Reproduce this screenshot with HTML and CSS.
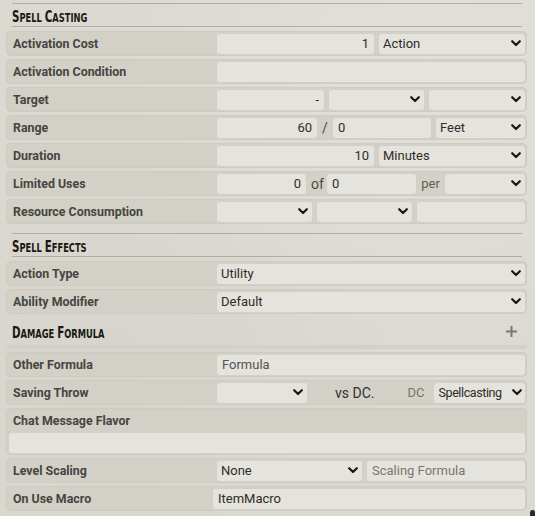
FILE: index.html
```html
<!DOCTYPE html>
<html>
<head>
<meta charset="utf-8">
<link rel="stylesheet" href="styles.css">
</head>
<body>
<div class="sheet">
  <div class="rule"></div>
  <h3 class="form-header"><span class="htext"><span class="cap">S</span>pell <span class="cap">C</span>asting</span></h3>
  <div class="rows">
    <div class="row">
      <span class="label">Activation Cost</span>
      <div class="fields">
        <input class="inp num w157" value="1">
        <div class="select grow"><span>Action</span><svg class="chev" viewBox="0 0 10 7"><path d="M1.2 1.2 L5 5 L8.8 1.2"/></svg></div>
      </div>
    </div>
    <div class="row">
      <span class="label">Activation Condition</span>
      <div class="fields">
        <input class="inp grow" value="">
      </div>
    </div>
    <div class="row">
      <span class="label">Target</span>
      <div class="fields">
        <input class="inp num w107" value="-">
        <div class="select w95"><span></span><svg class="chev" viewBox="0 0 10 7"><path d="M1.2 1.2 L5 5 L8.8 1.2"/></svg></div>
        <div class="select grow"><span></span><svg class="chev" viewBox="0 0 10 7"><path d="M1.2 1.2 L5 5 L8.8 1.2"/></svg></div>
      </div>
    </div>
    <div class="row">
      <span class="label">Range</span>
      <div class="fields">
        <input class="inp num w100" value="60">
        <span class="sep slash">/</span>
        <input class="inp w98" value="0">
        <div class="select grow"><span>Feet</span><svg class="chev" viewBox="0 0 10 7"><path d="M1.2 1.2 L5 5 L8.8 1.2"/></svg></div>
      </div>
    </div>
    <div class="row">
      <span class="label">Duration</span>
      <div class="fields">
        <input class="inp num w157" value="10">
        <div class="select grow"><span>Minutes</span><svg class="chev" viewBox="0 0 10 7"><path d="M1.2 1.2 L5 5 L8.8 1.2"/></svg></div>
      </div>
    </div>
    <div class="row">
      <span class="label">Limited Uses</span>
      <div class="fields">
        <input class="inp num w89" value="0">
        <span class="sep of">of</span>
        <input class="inp w89" value="0">
        <span class="sep per">per</span>
        <div class="select grow"><span></span><svg class="chev" viewBox="0 0 10 7"><path d="M1.2 1.2 L5 5 L8.8 1.2"/></svg></div>
      </div>
    </div>
    <div class="row">
      <span class="label">Resource Consumption</span>
      <div class="fields">
        <div class="select w95"><span></span><svg class="chev" viewBox="0 0 10 7"><path d="M1.2 1.2 L5 5 L8.8 1.2"/></svg></div>
        <div class="select w95"><span></span><svg class="chev" viewBox="0 0 10 7"><path d="M1.2 1.2 L5 5 L8.8 1.2"/></svg></div>
        <input class="inp grow" value="">
      </div>
    </div>
  </div>

  <div class="rule rule-gap"></div>
  <h3 class="form-header"><span class="htext"><span class="cap">S</span>pell <span class="cap">E</span>ffects</span></h3>
  <div class="rows">
    <div class="row">
      <span class="label">Action Type</span>
      <div class="fields">
        <div class="select grow"><span>Utility</span><svg class="chev" viewBox="0 0 10 7"><path d="M1.2 1.2 L5 5 L8.8 1.2"/></svg></div>
      </div>
    </div>
    <div class="row">
      <span class="label">Ability Modifier</span>
      <div class="fields">
        <div class="select grow"><span>Default</span><svg class="chev" viewBox="0 0 10 7"><path d="M1.2 1.2 L5 5 L8.8 1.2"/></svg></div>
      </div>
    </div>
  </div>

  <h3 class="damage-header">
    <span class="htext"><span class="cap">D</span>amage <span class="cap">F</span>ormula</span>
    <svg class="plus" viewBox="0 0 11 11"><path d="M5.5 0 V11 M0 5.5 H11"/></svg>
  </h3>
  <div class="damage-parts"></div>

  <div class="rows rows-tail">
    <div class="row">
      <span class="label">Other Formula</span>
      <div class="fields">
        <input class="inp grow ph-dark" placeholder="Formula">
      </div>
    </div>
    <div class="row">
      <span class="label">Saving Throw</span>
      <div class="fields tight">
        <div class="select w90"><span></span><svg class="chev" viewBox="0 0 10 7"><path d="M1.2 1.2 L5 5 L8.8 1.2"/></svg></div>
        <span class="vs">vs DC.</span>
        <span class="dc">DC</span>
        <div class="select grow spellcasting"><span>Spellcasting</span><svg class="chev" viewBox="0 0 10 7"><path d="M1.2 1.2 L5 5 L8.8 1.2"/></svg></div>
      </div>
    </div>
    <div class="row row-stacked">
      <span class="label">Chat Message Flavor</span>
      <input class="inp full" value="">
    </div>
    <div class="row">
      <span class="label">Level Scaling</span>
      <div class="fields">
        <div class="select w145"><span>None</span><svg class="chev" viewBox="0 0 10 7"><path d="M1.2 1.2 L5 5 L8.8 1.2"/></svg></div>
        <input class="inp grow ph-light" placeholder="Scaling Formula">
      </div>
    </div>
    <div class="row">
      <span class="label label-narrow">On Use Macro</span>
      <div class="fields">
        <input class="inp grow" value="ItemMacro">
      </div>
    </div>
  </div>
</div>
<div class="scroll-thumb"></div>
</body>
</html>
```

FILE: styles.css
```css
html, body {
  margin: 0;
  padding: 0;
}
body {
  width: 535px;
  height: 516px;
  overflow: hidden;
  background-color: #dbd9d1;
  background-image:
    radial-gradient(ellipse at 80% 10%, rgba(255,255,255,0.18), rgba(255,255,255,0) 55%),
    radial-gradient(ellipse at 20% 70%, rgba(0,0,0,0.025), rgba(0,0,0,0) 50%);
  font-family: Roboto, "Noto Sans", sans-serif;
  color: #4b4a44;
  position: relative;
}
.sheet {
  padding: 0 8px 0 6px;
}
.rule {
  margin: 3px 5px 0 6px;
  border-top: 1px solid #b1ae9f;
}
.rule-gap {
  margin-top: 9px;
}
.form-header {
  margin: 0 5px 0 6px;
  height: 22px;
  border-bottom: 1px solid #b1ae9f;
  font-family: "DejaVu Sans Condensed", "DejaVu Sans", sans-serif;
  font-stretch: condensed;
  font-weight: 700;
  line-height: 23px;
  color: #191813;
}
.htext {
  display: inline-block;
  font-size: 12.5px;
  text-transform: uppercase;
  transform: scaleX(0.74);
  transform-origin: left center;
  white-space: nowrap;
}
.cap {
  font-size: 15.5px;
}
.rows {
  margin-top: 4px;
  display: flex;
  flex-direction: column;
  gap: 3px;
}
.row {
  display: flex;
  align-items: center;
  box-sizing: border-box;
  height: 25px;
  padding: 0 2px 0 7px;
  border-radius: 5px;
  background: #d2d0c7;
  box-shadow: inset 0 0 0 1px #cdcbc2;
}
.label {
  flex: none;
  width: 204px;
  font-size: 12.4px;
  font-weight: 700;
  color: #46453f;
  white-space: nowrap;
}
.label-narrow {
  width: 200px;
}
.fields {
  flex: 1;
  display: flex;
  align-items: center;
  gap: 5px;
  min-width: 0;
}
.fields.tight {
  gap: 0;
}
.inp, .select {
  box-sizing: border-box;
  height: 20px;
  border: none;
  outline: none;
  border-radius: 3px;
  background: #e4e3dd;
  font-family: Roboto, "Noto Sans", sans-serif;
  font-size: 13px;
  color: #2e2d29;
  padding: 0 5px;
  margin: 0;
  min-width: 0;
}
.inp.num {
  text-align: right;
}
.select {
  display: flex;
  align-items: center;
  justify-content: space-between;
  padding: 0 4px 0 4px;
  white-space: nowrap;
}
.chev {
  flex: none;
  width: 10px;
  height: 7px;
}
.chev path {
  fill: none;
  stroke: #191813;
  stroke-width: 2.2;
  stroke-linecap: round;
  stroke-linejoin: round;
}
.grow { flex: 1; }
.w157 { width: 157px; flex: none; }
.w145 { width: 145px; flex: none; }
.w107 { width: 107px; flex: none; }
.w100 { width: 100px; flex: none; }
.w98  { width: 98px;  flex: none; }
.w95  { width: 95px;  flex: none; }
.w90  { width: 90px;  flex: none; }
.w89  { width: 89px;  flex: none; }
.sep {
  flex: none;
  font-size: 14px;
  color: #4b4a44;
  text-align: center;
}
.slash { width: 6px; }
.of { width: 11px; }
.per { width: 19px; color: #5f5e58; font-size: 13px; }
.vs {
  margin-left: 28px;
  font-size: 14px;
  color: #333230;
}
.dc {
  margin-left: 33px;
  font-size: 13px;
  color: #76746e;
}
.spellcasting {
  margin-left: 10px;
  font-size: 12.5px;
  letter-spacing: -0.4px;
  padding-right: 3px;
}
.ph-dark::placeholder { color: #55544f; opacity: 1; }
.ph-light::placeholder { color: #7a7872; opacity: 1; }

.damage-header {
  margin: 0 10px 0 6px;
  height: 31px;
  display: flex;
  align-items: center;
  justify-content: space-between;
  font-family: "DejaVu Sans Condensed", "DejaVu Sans", sans-serif;
  font-stretch: condensed;
  font-weight: 700;
  color: #191813;
}
.damage-header .htext {
  margin-top: 6px;
}
.plus {
  width: 11px;
  height: 11px;
  margin-top: 4px;
}
.plus path {
  stroke: #7a7872;
  stroke-width: 2;
  fill: none;
}
.damage-parts {
  height: 4px;
  border-radius: 0 0 5px 5px;
  background: #d2d0c7;
}
.rows-tail {
  margin-top: 3px;
}
.row-stacked {
  height: 47px;
  flex-direction: column;
  align-items: stretch;
  padding: 3px 2px 2px 3px;
}
.row-stacked .label {
  padding-left: 4px;
  line-height: 20px;
  height: 20px;
}
.inp.full {
  width: 100%;
  margin-top: 2px;
}
.scroll-thumb {
  position: absolute;
  right: 0;
  bottom: 0;
  width: 5px;
  height: 6px;
  border-radius: 3px 3px 0 0;
  background: #2a2a28;
}
```
